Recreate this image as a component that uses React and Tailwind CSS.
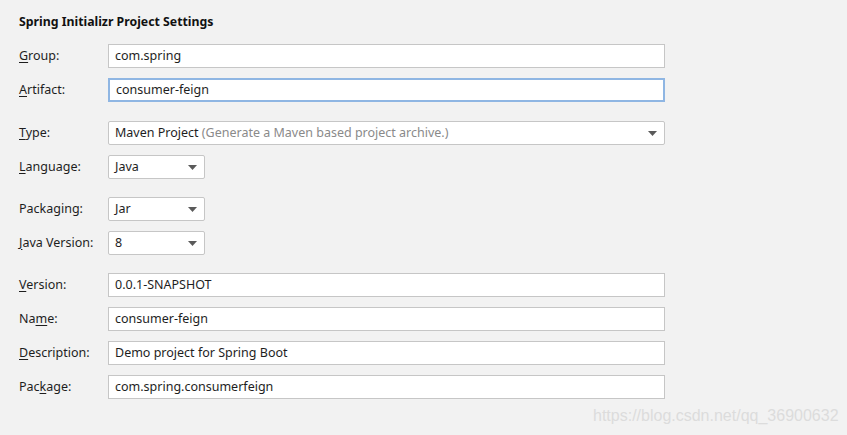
import React from 'react';

const font = { fontFamily: '"Noto Sans", "Liberation Sans", sans-serif' };

// Label with a mnemonic underline on one letter
const Label = ({ text, at }) => (
  <span className="w-[89px] shrink-0 text-[12.5px] text-[#1e1e1e]">
    {text.slice(0, at)}
    <span className="underline underline-offset-2">{text[at]}</span>
    {text.slice(at + 1)}
  </span>
);

const Arrow = () => (
  <svg width="9" height="5" viewBox="0 0 9 5" className="shrink-0">
    <path d="M0 0H9L4.5 5Z" fill="#5a5a5a" />
  </svg>
);

const TextField = ({ value, focused }) => (
  <div
    className={`h-6 w-[557px] bg-white flex items-center pl-[6px] text-[12.5px] text-[#1e1e1e] ${
      focused ? 'border-2 border-[#8fb6e3] pl-[5px]' : 'border border-[#c6c6c6]'
    }`}
  >
    {value}
  </div>
);

const Select = ({ children, wide }) => (
  <div
    className={`h-6 ${wide ? 'w-[557px]' : 'w-[97px]'} bg-white border border-[#c6c6c6] rounded-[2px] flex items-center justify-between pl-[6px] pr-[7px] text-[12.5px] text-[#1e1e1e]`}
  >
    <span>{children}</span>
    <Arrow />
  </div>
);

const Row = ({ label, at, children }) => (
  <div className="flex items-center h-6">
    <Label text={label} at={at} />
    {children}
  </div>
);

export default function App() {
  return (
    <div className="w-[847px] h-[435px] bg-[#f2f2f2] relative overflow-hidden" style={font}>
      <div className="pl-[19px] pt-[12px]">
        <h1 className="text-[12.3px] font-bold text-[#111] leading-5">Spring Initializr Project Settings</h1>

        <div className="mt-[12px] flex flex-col gap-[10px]">
          <Row label="Group:" at={0}><TextField value="com.spring" /></Row>
          <Row label="Artifact:" at={0}><TextField value="consumer-feign" focused /></Row>
        </div>

        <div className="mt-[19px] flex flex-col gap-[10px]">
          <Row label="Type:" at={0}>
            <Select wide>
              Maven Project <span className="text-[#8a8a8a]">(Generate a Maven based project archive.)</span>
            </Select>
          </Row>
          <Row label="Language:" at={0}><Select>Java</Select></Row>
        </div>

        <div className="mt-[18px] flex flex-col gap-[10px]">
          <Row label="Packaging:" at={5}><Select>Jar</Select></Row>
          <Row label="Java Version:" at={0}><Select>8</Select></Row>
        </div>

        <div className="mt-[18px] flex flex-col gap-[10px]">
          <Row label="Version:" at={0}><TextField value="0.0.1-SNAPSHOT" /></Row>
          <Row label="Name:" at={2}><TextField value="consumer-feign" /></Row>
          <Row label="Description:" at={0}><TextField value="Demo project for Spring Boot" /></Row>
          <Row label="Package:" at={3}><TextField value="com.spring.consumerfeign" /></Row>
        </div>
      </div>

      {/* watermark */}
      <div
        className="absolute left-[593px] top-[404px] text-[16px] text-[#dcdcdc]"
        style={{ fontFamily: '"Liberation Sans", Arial, sans-serif' }}
      >
        https://blog.csdn.net/qq_36900632
      </div>
    </div>
  );
}
